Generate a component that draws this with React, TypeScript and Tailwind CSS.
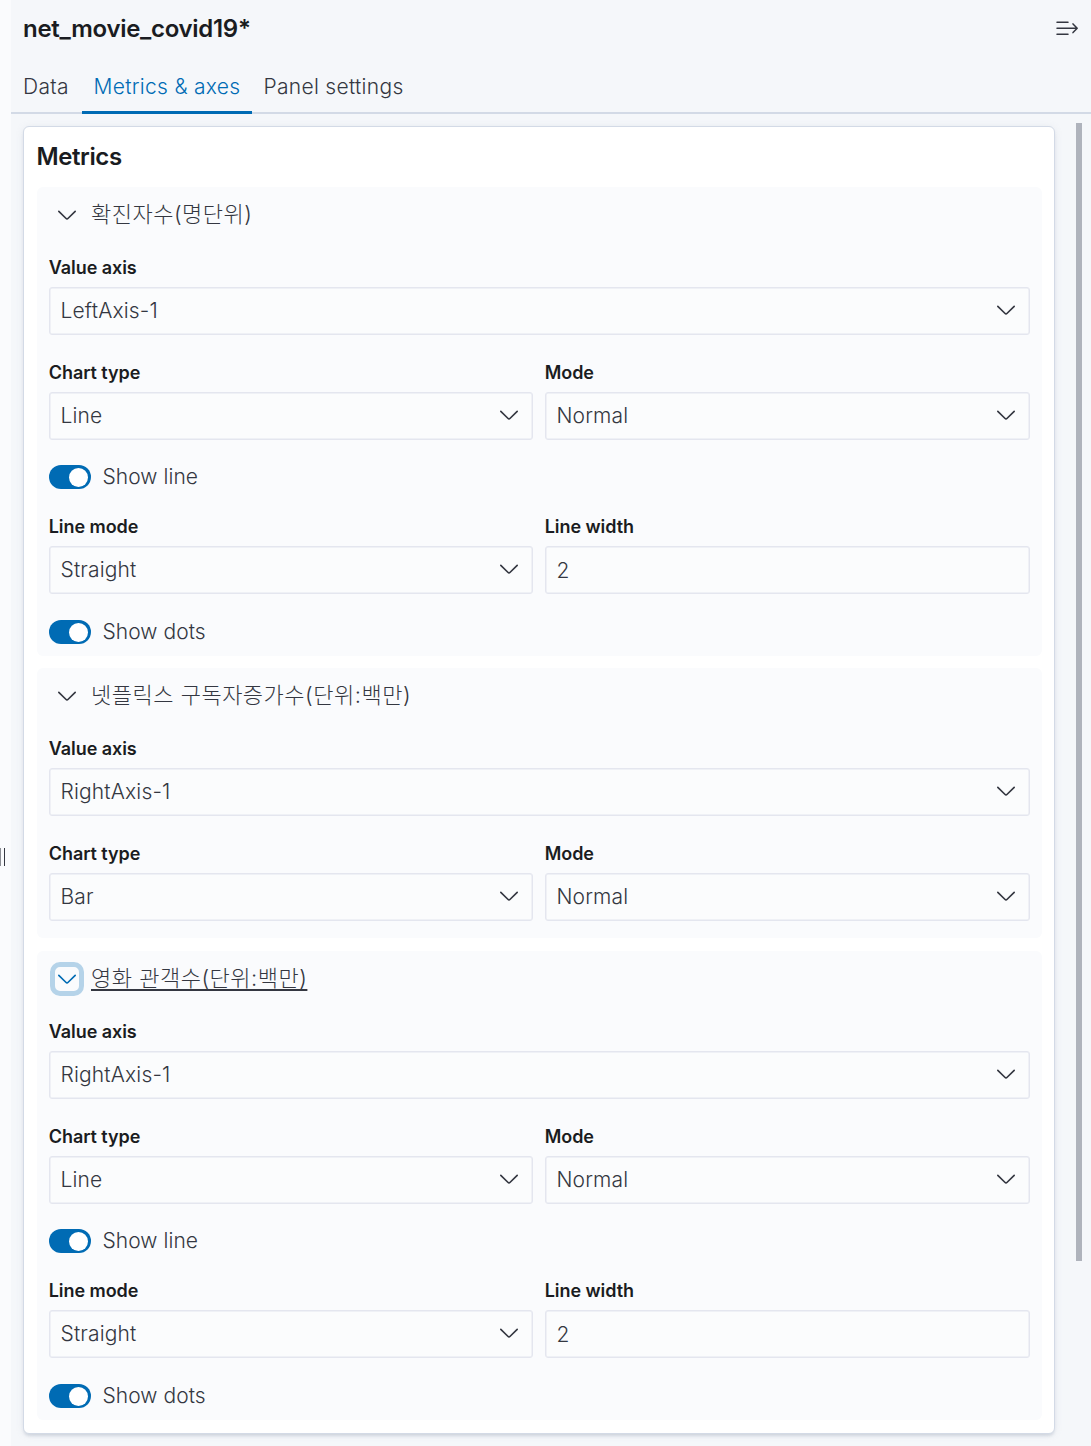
import React from 'react';

const Chevron = ({ className = '' }: { className?: string }) => (
  <svg className={className} width="24" height="24" viewBox="0 0 16 16" fill="currentColor">
    <path
      fillRule="evenodd"
      d="M13.069 5.157 8.384 9.768a.546.546 0 0 1-.768 0L2.93 5.158a.552.552 0 0 0-.771 0 .53.53 0 0 0 0 .759l4.684 4.61a1.65 1.65 0 0 0 2.312 0l4.684-4.61a.53.53 0 0 0 0-.76.552.552 0 0 0-.771 0Z"
    />
  </svg>
);

const MenuRight = () => (
  <svg width="24" height="24" viewBox="0 0 24 24" fill="none" stroke="currentColor" strokeWidth="1.5" strokeLinecap="round" strokeLinejoin="round">
    <path d="M2 6.25h11M2 12.25h20M2 18.25h11M18 7.9l4.2 4.35L18 16.6" />
  </svg>
);

type FieldProps = { label: string; value: string; input?: boolean; className?: string };

function Field({ label, value, input = false, className = 'flex-1' }: FieldProps) {
  return (
    <div className={`min-w-0 ${className}`}>
      <div className="mb-[6px] -ml-[0.25px] flex h-[27px] items-center pt-px text-[18px] font-semibold tracking-[-0.06px] text-[#1a1c21]">
        {label}
      </div>
      <div className="flex h-12 items-center justify-between rounded-[3px] border-[1.5px] border-[#e4e6ef] bg-[#fbfcfd] pr-[11px] pl-[10.5px] tracking-[0.15px] shadow-[inset_0_0_0_0.5px_#e4e6ef]">
        <span className={input ? 'pt-[2px]' : ''}>{value}</span>
        {!input && <Chevron className="mb-[2px]" />}
      </div>
    </div>
  );
}

function Switch({ label, className }: { label: string; className: string }) {
  return (
    <div className={`flex h-6 items-center ${className}`}>
      <div className="flex h-6 w-[42px] items-center justify-end rounded-full bg-[#006bb4] pr-[3px]">
        <div className="h-[19px] w-[19px] rounded-full bg-white" />
      </div>
      <span className="ml-[11.5px] tracking-[0.05px]">{label}</span>
    </div>
  );
}

type Metric = { title: string; axis: string; type: string; line?: boolean; focused?: boolean };

const metrics: Metric[] = [
  { title: '확진자수(명단위)', axis: 'LeftAxis-1', type: 'Line', line: true },
  { title: '넷플릭스 구독자증가수(단위:백만)', axis: 'RightAxis-1', type: 'Bar' },
  { title: '영화 관객수(단위:백만)', axis: 'RightAxis-1', type: 'Line', line: true, focused: true },
];

function Section({ title, axis, type, line, focused }: Metric) {
  return (
    <section className={`w-[1005px] rounded-[6px] bg-[#fafbfd] px-3 ${line ? 'h-[469px]' : 'h-[270px]'}`}>
      <div className="flex h-[67px] items-start pt-[11px]">
        <div
          className={`ml-px flex h-[34px] w-[34px] items-center justify-center rounded-[10px] ${
            focused ? 'border-[5px] border-[#b5d3e9] text-[#006bb4]' : ''
          }`}
        >
          <Chevron className="shrink-0" />
        </div>
        <span
          className={`ml-[7px] text-[22px] leading-[32px] tracking-[0.5px] ${
            focused ? 'underline decoration-[1.5px] underline-offset-[3px]' : ''
          }`}
        >
          {title}
        </span>
      </div>
      <div className="flex">
        <Field label="Value axis" value={axis} />
      </div>
      <div className="mt-[24px] flex gap-3">
        <Field label="Chart type" value={type} className="w-[484px]" />
        <Field label="Mode" value="Normal" />
      </div>
      {line && (
        <>
          <Switch label="Show line" className="mt-[25px]" />
          <div className="mt-[24px] flex gap-3">
            <Field label="Line mode" value="Straight" className="w-[484px]" />
            <Field label="Line width" value="2" input />
          </div>
          <Switch label="Show dots" className="mt-[26px]" />
        </>
      )}
    </section>
  );
}

export default function App() {
  return (
    <div className="flex h-[1446px] w-[1091px] overflow-hidden bg-[#f5f7fa] font-['Inter','Noto_Sans_CJK_KR',sans-serif] text-[21px] leading-[30px] font-light text-[#343741]">
      <div className="flex w-[11px] shrink-0 items-center bg-[#fafbfd] pt-[268px]">
        <div className="h-[18px] w-[5px] border-r-[1.5px] border-l-[1.5px] border-r-[#343741] border-l-[#8a8c93]" />
      </div>
      <div className="min-w-0 flex-1">
        <header className="flex h-[62px] items-start justify-between pt-[14px] pr-3 pl-3">
          <h1 className="text-[24px] leading-[30px] font-semibold tracking-[-0.3px] text-[#1a1c21]">net_movie_covid19*</h1>
          <div className="mt-[2px]">
            <MenuRight />
          </div>
        </header>
        <nav className="flex h-[52px] border-b-2 border-[#d3dae6] tracking-[0.3px]">
          <div className="flex h-[52px] w-[71px] items-start pt-[10px] pl-3">Data</div>
          <div className="flex h-[52px] w-[170px] items-start border-b-[3px] border-[#006bb4] pt-[10px] pl-[11.5px] whitespace-nowrap text-[#006bb4]">
            Metrics &amp; axes
          </div>
          <div className="flex h-[52px] items-start pt-[10px] pl-[11.5px]">Panel settings</div>
        </nav>
        <div className="flex">
          <main className="mt-3 ml-3 h-[1308px] w-[1032px] rounded-[6px] border border-[#d3dae6] bg-white px-[13px] pt-[15px] shadow-[0_3px_3px_-1px_rgba(152,162,179,0.3),0_1px_8px_-2px_rgba(152,162,179,0.3)]">
            <h2 className="mb-[15px] -ml-[0.5px] text-[24px] leading-[30px] font-semibold tracking-[-0.4px] text-[#1a1c21]">Metrics</h2>
            <div className="flex flex-col">
              <Section {...metrics[0]} />
              <div className="h-3" />
              <Section {...metrics[1]} />
              <div className="h-[13px]" />
              <Section {...metrics[2]} />
            </div>
          </main>
          <div className="mt-[9px] ml-[21px] h-[1138px] w-[6px] bg-[#afb3bc]" />
        </div>
      </div>
    </div>
  );
}
